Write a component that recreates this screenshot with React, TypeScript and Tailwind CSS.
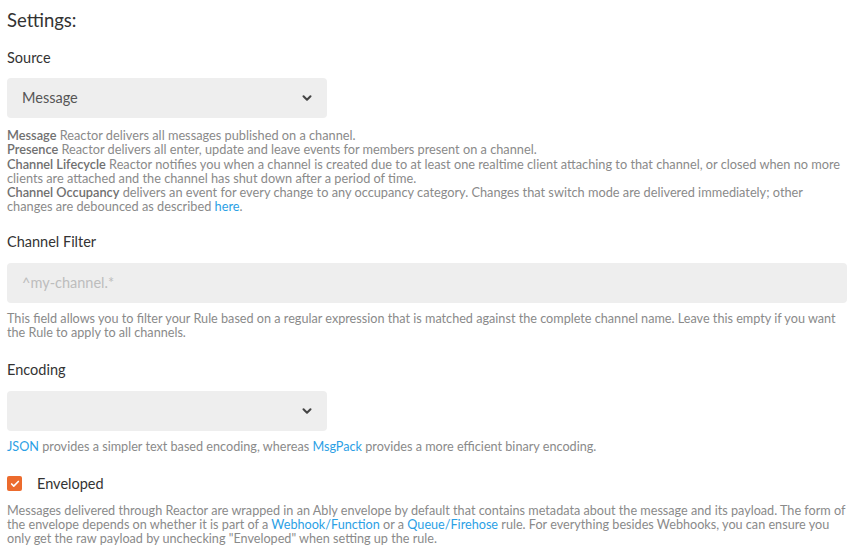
import { ChevronDown, Check } from "lucide-react";

const link = "text-[#2c9fe5]";
const help = "text-[12.65px] leading-[14.3px] text-[#8a8a8a]";

function Select({ value }: { value?: string }) {
  return (
    <div className="w-[320px] h-10 rounded-[4px] bg-[#eeeeee] flex items-center justify-between pl-[15px] pr-[13px]">
      <span className="text-[14.5px] text-[#555]">{value ?? ""}</span>
      <ChevronDown size={14} strokeWidth={3.5} className="text-[#444]" />
    </div>
  );
}

export default function App() {
  return (
    <div
      className="min-h-screen bg-white pl-[7px] pr-[10px] pt-[7px] text-[#333]"
      style={{ fontFamily: "Lato, 'Open Sans', sans-serif" }}
    >
      <h2 className="text-[18.5px] leading-[26px] text-[#333]">Settings:</h2>

      <label className="block mt-[16px] text-[14.5px] leading-[18px]">Source</label>
      <div className="mt-[11px]">
        <Select value="Message" />
      </div>
      <div className="mt-[10px] text-[12.75px] leading-[14.3px] text-[#8a8a8a]">
        <p>
          <b className="font-semibold text-[#707070]">Message</b> Reactor delivers all messages published on a channel.
        </p>
        <p>
          <b className="font-semibold text-[#707070]">Presence</b> Reactor delivers all enter, update and leave events for members present on a channel.
        </p>
        <p>
          <b className="font-semibold text-[#707070]">Channel Lifecycle</b> Reactor notifies you when a channel is created due to at least one realtime client attaching to that channel, or closed when no more clients are attached and the channel has shut down after a period of time.
        </p>
        <p>
          <b className="font-semibold text-[#707070]">Channel Occupancy</b> delivers an event for every change to any occupancy category. Changes that switch mode are delivered immediately; other changes are debounced as described <a className={link}>here</a>.
        </p>
      </div>

      <label className="block mt-[19px] text-[14.5px] leading-[18px]">Channel Filter</label>
      <div className="mt-[12px] h-10 rounded-[4px] bg-[#eeeeee] flex items-center pl-[15px] text-[14.5px] text-[#bdbdbd]">
        ^my-channel.*
      </div>
      <p className={`mt-[9px] ${help}`}>
        This field allows you to filter your Rule based on a regular expression that is matched against the complete channel name. Leave this empty if you want the Rule to apply to all channels.
      </p>

      <label className="block mt-[21px] text-[14.5px] leading-[18px]">Encoding</label>
      <div className="mt-[12px]">
        <Select />
      </div>
      <p className={`mt-[9px] ${help}`}>
        <a className={link}>JSON</a> provides a simpler text based encoding, whereas <a className={link}>MsgPack</a> provides a more efficient binary encoding.
      </p>

      <div className="mt-[20px] flex items-center gap-[15px]">
        <span className="w-[15px] h-[15px] rounded-[2px] bg-[#ec6b2d] flex items-center justify-center">
          <Check size={10} strokeWidth={4} className="text-white" />
        </span>
        <span className="text-[14.5px] leading-[18px] text-[#333]">Enveloped</span>
      </div>
      <p className={`mt-[11px] ${help}`}>
        Messages delivered through Reactor are wrapped in an Ably envelope by default that contains metadata about the message and its payload. The form of the envelope depends on whether it is part of a <a className={link}>Webhook/Function</a> or a <a className={link}>Queue/Firehose</a> rule. For everything besides Webhooks, you can ensure you only get the raw payload by unchecking "Enveloped" when setting up the rule.
      </p>
    </div>
  );
}
